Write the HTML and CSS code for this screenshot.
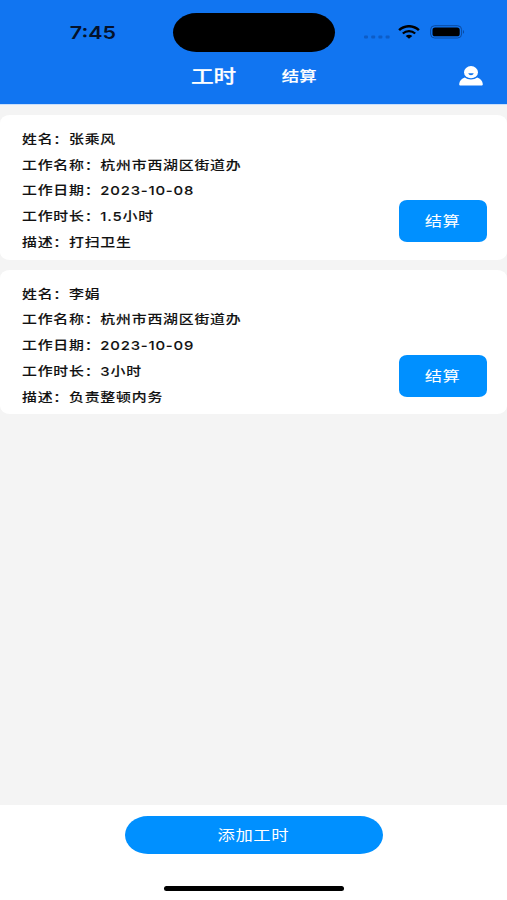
FILE: index.html
```html
<!DOCTYPE html>
<html lang="zh-CN">
<head>
<meta charset="utf-8">
<title>工时</title>
<link rel="stylesheet" href="styles.css">
</head>
<body>
<div class="app">
  <header class="header">
    <div class="status">
      <div class="clock"><span class="wide">7:45</span></div>
      <div class="island"></div>
      <div class="indicators">
        <svg class="signal" width="26" height="4" viewBox="0 0 26 4"><g fill="#0d5cc6"><rect x="0" y="0.5" width="4" height="3" rx="1"/><rect x="7.2" y="0.5" width="4" height="3" rx="1"/><rect x="14.4" y="0.5" width="4" height="3" rx="1"/><rect x="21.6" y="0.5" width="4" height="3" rx="1"/></g></svg>
        <svg class="wifi" width="22" height="14" viewBox="0 0 22 14"><g fill="none" stroke="#000"><path d="M1.1 5.2C6.5-.1 15.5-.1 20.900 5.200" stroke-width="2.500"/><path d="M4.800 8.500c3.500-3.100 8.900-3.100 12.400 0" stroke-width="2.300"/></g><path d="M7.700 11c1.900-1.700 4.700-1.700 6.600 0L11 13.800z"/></svg>
        <svg class="battery" width="35" height="14" viewBox="0 0 35 14"><rect x=".6" y=".7" width="31" height="12.3" rx="4" fill="none" stroke="#0a4aa0"/><rect x="2.5" y="2.4" width="27.2" height="8.9" rx="2.6"/><path d="M33 5c1.400.6 1.400 3.200 0 3.800z" fill="#0a4aa0"/></svg>
      </div>
    </div>
    <nav class="nav">
      <a class="tab tab-active"><span class="wide">工时</span></a>
      <a class="tab"><span class="wide">结算</span></a>
      <svg class="user" width="24" height="20" viewBox="0 0 24 20"><path d="M5.800 11.600C2.600 12.700.5 15 .2 18c-.1 1 .5 1.600 1.500 1.600h20.600c1 0 1.600-.6 1.500-1.600-.3-3-2.400-5.300-5.600-6.400-1.600 1.200-3.800 1.900-6.200 1.900s-4.600-.7-6.200-1.900z" fill="#fff"/><ellipse cx="12" cy="6.200" rx="7" ry="6.100" fill="#fff"/><path d="M9.300 7.300h5.400c-.5 2.500-4.900 2.500-5.400 0z" fill="#1175ee"/></svg>
    </nav>
  </header>
  <main class="list">
    <article class="card">
      <div class="details">
        <p><span class="wide">姓名：张乘风</span></p>
        <p><span class="wide">工作名称：杭州市西湖区街道办</span></p>
        <p><span class="wide">工作日期：2023-10-08</span></p>
        <p><span class="wide">工作时长：1.5小时</span></p>
        <p><span class="wide">描述：打扫卫生</span></p>
      </div>
      <button class="settle"><span class="wide">结算</span></button>
    </article>
    <article class="card">
      <div class="details">
        <p><span class="wide">姓名：李娟</span></p>
        <p><span class="wide">工作名称：杭州市西湖区街道办</span></p>
        <p><span class="wide">工作日期：2023-10-09</span></p>
        <p><span class="wide">工作时长：3小时</span></p>
        <p><span class="wide">描述：负责整顿内务</span></p>
      </div>
      <button class="settle"><span class="wide">结算</span></button>
    </article>
  </main>
  <footer class="footer">
    <button class="add"><span class="wide">添加工时</span></button>
    <div class="home-bar"></div>
  </footer>
</div>
</body>
</html>
```
FILE: styles.css
```css
* {
  box-sizing: border-box;
}

body {
  margin: 0;
  font-family: Inter, "Noto Sans CJK SC", sans-serif;
  color: #111;
}

p {
  margin: 0;
}

button {
  border: 0;
  padding: 0 0 2px;
  font-family: inherit;
  color: #fff;
  background: #0090ff;
}

/* Extended letterforms used by every label */
.wide {
  display: inline-block;
  white-space: nowrap;
  transform: scaleX(1.221);
}

.app {
  display: flex;
  flex-direction: column;
  width: 507px;
  height: 900px;
  background: #f4f4f4;
}

.header {
  height: 105px;
  background: #1175f1;
  border-bottom: 1px solid #c9dffb;
}

.status {
  display: grid;
  grid-template-columns: 173px 162px 1fr;
  align-items: center;
  height: 54px;
  padding-top: 10px;
}

.clock {
  text-align: center;
  padding-left: 12px;
  padding-top: 1px;
  font-size: 17.6px;
  font-weight: 600;
  line-height: 38px;
  color: #04122b;
}

.island {
  height: 39px;
  border-radius: 24px / 20px;
  background: #000;
}

.indicators {
  display: flex;
  align-items: center;
  padding-left: 29px;
}

.signal {
  margin-top: 9px;
}

.wifi {
  margin-left: 8px;
}

.battery {
  margin-left: 10px;
}

.nav {
  display: flex;
  align-items: center;
  height: 44px;
  padding: 0 24px 0 195px;
  color: #fff;
}

.tab {
  margin-left: 53px;
  padding-bottom: 3px;
  font-size: 14.2px;
  font-weight: 500;
  -webkit-text-stroke: 0.2px;
}

.tab-active {
  margin-left: 0;
  font-size: 18.6px;
}

.user {
  margin-left: auto;
}

.list {
  flex: 1;
  display: flex;
  flex-direction: column;
  gap: 10px;
  padding-top: 10px;
}

.card {
  display: flex;
  justify-content: space-between;
  align-items: flex-end;
  height: 144.7px;
  padding: 12px 20px 17.3px 22px;
  border-radius: 10px / 8px;
  background: #fff;
}

.details {
  align-self: flex-start;
  font-size: 12.2px;
  font-weight: 500;
  line-height: 25.7px;
  letter-spacing: 0.65px;
  -webkit-text-stroke: 0.1px;
}

.details .wide {
  transform-origin: left;
}

.settle {
  width: 88px;
  height: 42px;
  border-radius: 8px / 7px;
  font-size: 14.2px;
  letter-spacing: 0.4px;
}

.footer {
  display: flex;
  flex-direction: column;
  align-items: center;
  height: 95px;
  padding-top: 10.5px;
  background: #fff;
}

.add {
  width: 258px;
  height: 38px;
  border-radius: 23px / 19px;
  font-size: 14.2px;
  letter-spacing: 0.5px;
}

.home-bar {
  width: 180px;
  height: 5px;
  margin-top: 32.5px;
  border-radius: 3px;
  background: #000;
}
```
